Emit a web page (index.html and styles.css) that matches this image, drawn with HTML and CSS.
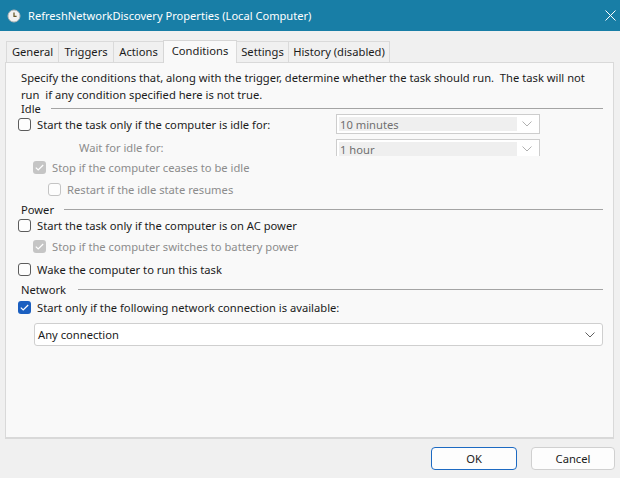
FILE: index.html
```html
<!DOCTYPE html>
<html lang="en">
<head>
  <meta charset="UTF-8">
  <title>RefreshNetworkDiscovery Properties (Local Computer)</title>
  <link rel="stylesheet" href="styles.css">
</head>
<body>

  <div class="titlebar">
    <svg class="title-icon" width="14" height="14" viewBox="0 0 14 14">
      <circle cx="7" cy="7" r="6" fill="#f2f2f2" stroke="#b8b8b8" stroke-width="1"/>
      <path d="M7 3.5V7.3H9.6" fill="none" stroke="#6b5a2a" stroke-width="1.3"/>
    </svg>
    <span class="title-text">RefreshNetworkDiscovery Properties (Local Computer)</span>
    <svg class="close-icon" width="11" height="11" viewBox="0 0 11 11">
      <path d="M0.5 0.5L10.5 10.5M10.5 0.5L0.5 10.5" stroke="#fff" stroke-width="1"/>
    </svg>
  </div>

  <div class="tabs">
    <div class="tab tab-general">General</div>
    <div class="tab tab-triggers">Triggers</div>
    <div class="tab tab-actions">Actions</div>
    <div class="tab tab-conditions active">Conditions</div>
    <div class="tab tab-settings">Settings</div>
    <div class="tab tab-history">History (disabled)</div>
  </div>

  <div class="panel">
    <p class="intro">Specify the conditions that, along with the trigger, determine whether the task should run.&nbsp; The task will not run &nbsp;if any condition specified here is not true.</p>

    <div class="group group-idle"><span>Idle</span></div>

    <div class="row row-idle">
      <label class="check"><span class="box"></span>Start the task only if the computer is idle for:</label>
      <div class="select disabled">
        <span class="select-value">10 minutes</span>
        <span class="select-arrow"><svg width="10" height="6" viewBox="0 0 10 6"><path d="M0.5 0.5L5 5L9.5 0.5" fill="none" stroke="#b0b0b0"/></svg></span>
      </div>
    </div>

    <div class="row row-wait">
      <span class="label-muted">Wait for idle for:</span>
      <div class="select disabled">
        <span class="select-value">1 hour</span>
        <span class="select-arrow"><svg width="10" height="6" viewBox="0 0 10 6"><path d="M0.5 0.5L5 5L9.5 0.5" fill="none" stroke="#b0b0b0"/></svg></span>
      </div>
    </div>

    <div class="row indent-1 row-stop">
      <label class="check muted"><span class="box checked-disabled"><svg width="9" height="7" viewBox="0 0 9 7"><path d="M0.8 3.6L3.2 6L8.2 1" fill="none" stroke="#fff" stroke-width="1.2"/></svg></span>Stop if the computer ceases to be idle</label>
    </div>

    <div class="row indent-2 row-restart">
      <label class="check muted"><span class="box disabled"></span>Restart if the idle state resumes</label>
    </div>

    <div class="group group-power"><span>Power</span></div>

    <div class="row">
      <label class="check"><span class="box"></span>Start the task only if the computer is on AC power</label>
    </div>

    <div class="row indent-1 row-battery">
      <label class="check muted"><span class="box checked-disabled"><svg width="9" height="7" viewBox="0 0 9 7"><path d="M0.8 3.6L3.2 6L8.2 1" fill="none" stroke="#fff" stroke-width="1.2"/></svg></span>Stop if the computer switches to battery power</label>
    </div>

    <div class="row row-wake">
      <label class="check"><span class="box"></span>Wake the computer to run this task</label>
    </div>

    <div class="group group-network"><span>Network</span></div>

    <div class="row row-network">
      <label class="check"><span class="box checked"><svg width="9" height="7" viewBox="0 0 9 7"><path d="M0.8 3.6L3.2 6L8.2 1" fill="none" stroke="#fff" stroke-width="1.2"/></svg></span>Start only if the following network connection is available:</label>
    </div>

    <div class="select wide">
      <span class="select-value">Any connection</span>
      <span class="select-arrow"><svg width="10" height="6" viewBox="0 0 10 6"><path d="M0.5 0.5L5 5L9.5 0.5" fill="none" stroke="#606060"/></svg></span>
    </div>
  </div>

  <div class="footer">
    <button class="btn btn-default">OK</button>
    <button class="btn">Cancel</button>
  </div>

</body>
</html>
```

FILE: styles.css
```css
body {
  margin: 0;
  width: 620px;
  height: 478px;
  overflow: hidden;
  font-family: "Noto Sans", "Open Sans", sans-serif;
  font-size: 11.2px;
  color: #1b1b1b;
  background-color: #f0f0f0;
}

/* window caption */
.titlebar {
  height: 31px;
  display: flex;
  align-items: center;
  background-color: #187ea6;
  color: white;
  padding-left: 7px;
}

.title-icon {
  margin-right: 7px;
}

.title-text {
  flex: 1;
  font-size: 11.1px;
}

.close-icon {
  margin-right: 4px;
}

/* tab strip */
.tabs {
  display: flex;
  align-items: flex-end;
  margin-top: 9px;
  padding-left: 6px;
  height: 22px;
  position: relative;
  z-index: 1;
}

.tab {
  height: 21px;
  line-height: 19px;
  text-align: center;
  border: 1px solid #dadada;
  border-bottom: none;
  margin-right: -1px;
  background-color: #f0f0f0;
  box-sizing: border-box;
}

.tab-general { width: 53px; }
.tab-triggers { width: 56px; }
.tab-actions { width: 51px; }
.tab-conditions { width: 74px; }
.tab-settings { width: 53px; }
.tab-history { width: 102px; }

.tab.active {
  height: 23px;
  line-height: 20px;
  margin-bottom: -1px;
  background-color: #f9f9f9;
  border-color: #d6d6d6;
}

/* property page */
.panel {
  margin: 0 6px 0 5px;
  height: 377px;
  background-color: #f9f9f9;
  border: 1px solid #d9d9d9;
  border-bottom-width: 2px;
  padding: 0 10px 0 12px;
  box-sizing: border-box;
}

.intro {
  margin: 6px 0 0 3px;
  line-height: 17px;
  width: 572px;
}

.group {
  display: flex;
  align-items: center;
  height: 12px;
  padding-left: 3px;
}

.group::after {
  content: "";
  flex: 1;
  height: 1px;
  margin-left: 10px;
  background-color: #a4a4a4;
}

.group-idle {
  margin-top: -1px;
}

.group-power {
  margin-top: 4px;
}

.group-network {
  margin-top: 4px;
}

.group-network::after {
  margin-left: 12px;
}

.row {
  display: flex;
  align-items: center;
  height: 20px;
}

.indent-1 {
  padding-left: 15px;
}

.indent-2 {
  padding-left: 30px;
}

.row-idle .select {
  margin-left: auto;
  margin-right: 63px;
}

.row-wait {
  margin-top: 4px;
  height: 18px;
  overflow: hidden;
  align-items: flex-start;
}

.row-wait .label-muted {
  margin-left: 61px;
  line-height: 20px;
}

.row-wait .select {
  margin-left: auto;
  margin-right: 63px;
  margin-top: 1px;
}

.row-stop {
  margin-top: 1px;
}

.row-restart {
  margin-top: 2px;
}

.row-battery {
  margin-top: 1px;
}

.row-wake {
  margin-top: 3px;
}

.row-network {
  margin-top: 2px;
}

.label-muted,
.muted {
  color: #8c8c8c;
}

/* checkboxes */
.check {
  display: flex;
  align-items: center;
}

.box {
  width: 13px;
  height: 13px;
  box-sizing: border-box;
  border: 1px solid #5c5c5c;
  border-radius: 3px;
  background-color: #fdfdfd;
  margin-right: 6px;
  display: flex;
  align-items: center;
  justify-content: center;
}

.box.disabled {
  border-color: #c4c4c4;
}

.box.checked-disabled {
  border: none;
  background-color: #c5c5c5;
}

.box.checked {
  border: none;
  background-color: #1b5fc0;
}

/* drop-down lists */
.select {
  display: flex;
  height: 20px;
  box-sizing: border-box;
  border: 1px solid #cdcdcd;
  background-color: white;
}

.select.disabled {
  width: 204px;
  padding: 2px;
  color: #707070;
}

.select.disabled .select-value {
  flex: 1;
  line-height: 15px;
  background-color: #efefef;
  padding-left: 1px;
}

.select.disabled .select-arrow {
  width: 20px;
  display: flex;
  align-items: center;
  justify-content: center;
}

.select.wide {
  margin: 6px 0 0 16px;
  height: 23px;
  border-color: #cfcfcf;
  border-radius: 3px;
  align-items: center;
  padding: 0 7px 0 3px;
}

.select.wide .select-value {
  flex: 1;
}

.select.wide .select-arrow {
  display: flex;
  align-items: center;
}

/* dialog buttons */
.footer {
  display: flex;
  justify-content: flex-end;
  padding: 8px 5px 0 0;
  gap: 14px;
}

.btn {
  width: 84px;
  height: 23px;
  font-family: inherit;
  font-size: 11.2px;
  color: #1b1b1b;
  background-color: #fdfdfd;
  border: 1px solid #d0d0d0;
  border-radius: 4px;
}

.btn-default {
  width: 86px;
  border-color: #1d6ac2;
}
```
